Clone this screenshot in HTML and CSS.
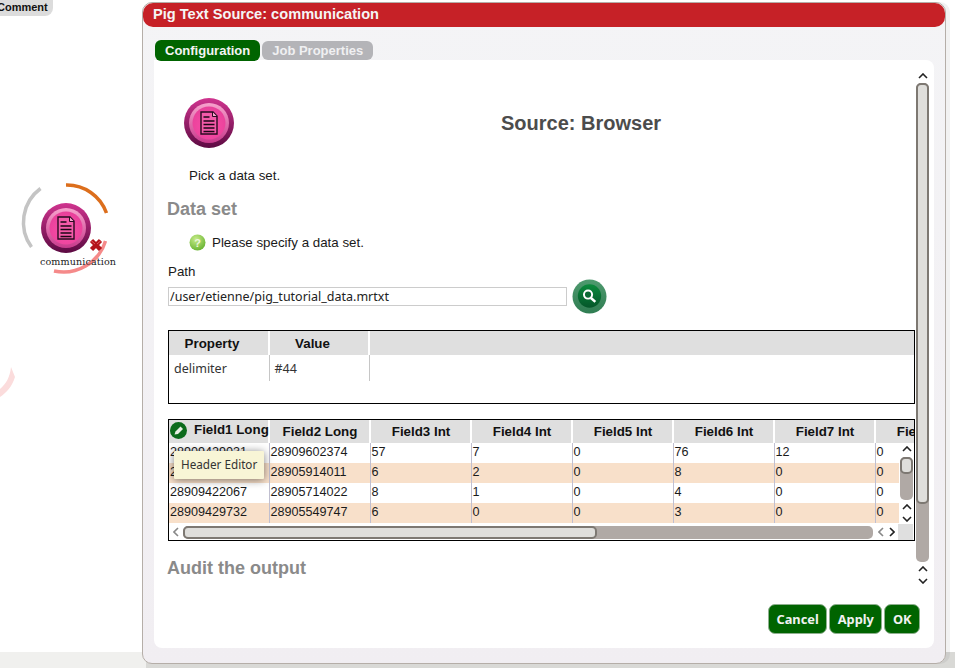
FILE: index.html
```html
<!DOCTYPE html>
<html lang="en">
<head>
  <meta charset="UTF-8">
  <title>Pig Text Source: communication</title>
  <link rel="stylesheet" href="styles.css">
</head>
<body>
  <svg class="defs" width="0" height="0">
    <defs>
      <linearGradient id="ringOuter" x1="0" y1="0" x2="0" y2="1">
        <stop offset="0" stop-color="#d0348f"/>
        <stop offset="1" stop-color="#5c0a42"/>
      </linearGradient>
      <linearGradient id="ringInner" x1="0" y1="0" x2="0" y2="1">
        <stop offset="0" stop-color="#f7a3cd"/>
        <stop offset="1" stop-color="#c83a8c"/>
      </linearGradient>
      <radialGradient id="ringFace" cx="0.5" cy="0.6" r="0.6">
        <stop offset="0" stop-color="#fb4fa8"/>
        <stop offset="1" stop-color="#e8409a"/>
      </radialGradient>
      <linearGradient id="searchOuter" x1="0" y1="0" x2="0" y2="1">
        <stop offset="0" stop-color="#4f9a6f"/>
        <stop offset="1" stop-color="#2f7d52"/>
      </linearGradient>
      <linearGradient id="searchInner" x1="0" y1="0" x2="0" y2="1">
        <stop offset="0" stop-color="#0a8a3c"/>
        <stop offset="1" stop-color="#05562a"/>
      </linearGradient>
      <radialGradient id="helpFace" cx="0.4" cy="0.3" r="0.8">
        <stop offset="0" stop-color="#c8ec8a"/>
        <stop offset="1" stop-color="#5fae28"/>
      </radialGradient>
      <symbol id="sourceIcon" viewBox="0 0 50 50">
        <circle cx="25" cy="25" r="25" fill="url(#ringOuter)"/>
        <circle cx="25" cy="25" r="20" fill="url(#ringInner)"/>
        <circle cx="25" cy="25" r="16.5" fill="url(#ringFace)"/>
        <path d="M17 14h12l4 4v18H17z" fill="#f35aa9" stroke="#2a0a20" stroke-width="1.4"/>
        <path d="M28.500 14v4.500H33" fill="#f8a8d0" stroke="#2a0a20" stroke-width="1"/>
        <path d="M19.500 19h6M19.500 23h11M19.500 26.500h11M19.500 30h11M19.500 33.500h11" stroke="#1c0616" stroke-width="1.500" fill="none"/>
      </symbol>
      <symbol id="chevUp" viewBox="0 0 10 6">
        <path d="M1 5l4-4 4 4" fill="none" stroke="currentColor" stroke-width="1.600"/>
      </symbol>
      <symbol id="chevDown" viewBox="0 0 10 6">
        <path d="M1 1l4 4 4-4" fill="none" stroke="currentColor" stroke-width="1.600"/>
      </symbol>
      <symbol id="chevLeft" viewBox="0 0 6 10">
        <path d="M5 1L1 5l4 4" fill="none" stroke="currentColor" stroke-width="1.600"/>
      </symbol>
      <symbol id="chevRight" viewBox="0 0 6 10">
        <path d="M1 1l4 4-4 4" fill="none" stroke="currentColor" stroke-width="1.600"/>
      </symbol>
    </defs>
  </svg>

  <div class="canvas">
    <div class="comment-tab">Comment</div>

    <div class="node">
      <svg class="node-rings" width="100" height="100" viewBox="0 0 100 100">
        <path d="M29.500 4.500A42 42 0 0 0 20.500 63" fill="none" stroke="#c4c4c4" stroke-width="3.500"/>
        <path d="M55 1A42 42 0 0 1 95.500 29" fill="none" stroke="#dc6e1c" stroke-width="3.500"/>
        <path d="M94.500 57A44 44 0 0 1 43 87" fill="none" stroke="#f58a8a" stroke-width="3.500"/>
      </svg>
      <svg class="node-icon" width="50" height="50"><use href="#sourceIcon"/></svg>
      <svg class="node-error" width="14" height="14" viewBox="0 0 14 14">
        <path d="M2.500 2.500l9 9M11.500 2.500l-9 9" fill="none" stroke="#b3141a" stroke-width="4.500"/>
        <path d="M2 2.500l4 3.500M12 2.500L8 6" fill="none" stroke="#e2585c" stroke-width="1"/>
      </svg>
      <div class="node-label">communication</div>
    </div>

    <svg class="stray-ring" width="16" height="31" viewBox="0 0 16 31">
      <path d="M11 0L15 10C12 20 6 26 0 30V22C6 17 10 10 11 0z" fill="#fbdcdc"/>
    </svg>

    <div class="floor">
      <div class="floor-left"></div>
      <div class="floor-right"></div>
    </div>

    <div class="dialog">
      <div class="dialog-title">Pig Text Source: communication</div>

      <div class="tabs">
        <div class="tab tab-active">Configuration</div>
        <div class="tab">Job Properties</div>
      </div>

      <div class="panel">
        <div class="panel-main">
          <div class="content">
            <div class="source-head">
              <svg class="source-icon" width="50" height="50"><use href="#sourceIcon"/></svg>
              <h2 class="source-title">Source: Browser</h2>
            </div>
            <p class="intro">Pick a data set.</p>

            <h3 class="section">Data set</h3>
            <div class="hint">
              <svg width="17" height="17" viewBox="0 0 17 17">
                <circle cx="8.500" cy="8.500" r="8" fill="url(#helpFace)"/>
                <text x="8.500" y="12.500" class="hint-mark">?</text>
              </svg>
              <span>Please specify a data set.</span>
            </div>

            <label class="path-label">Path</label>
            <div class="path-row">
              <input class="path-input" type="text" value="/user/etienne/pig_tutorial_data.mrtxt">
              <svg class="search-btn" width="35" height="35" viewBox="0 0 36 36">
                <circle cx="18" cy="18" r="17.500" fill="url(#searchOuter)"/>
                <circle cx="18" cy="17.500" r="12" fill="url(#searchInner)"/>
                <circle cx="16.500" cy="16" r="4.200" fill="#0b6a35" stroke="#fff" stroke-width="2"/>
                <path d="M19.500 19.500l4.500 4" stroke="#fff" stroke-width="2.600"/>
              </svg>
            </div>

            <div class="prop-box">
              <table class="prop-table">
                <thead>
                  <tr><th>Property</th><th>Value</th><th class="rest"></th></tr>
                </thead>
                <tbody>
                  <tr><td>delimiter</td><td>#44</td><td class="rest"></td></tr>
                </tbody>
              </table>
            </div>

            <div class="grid-box">
              <div class="grid-scroll">
                <table class="data-table">
                  <thead>
                    <tr>
                      <th class="first">Field1 Long</th>
                      <th>Field2 Long</th>
                      <th>Field3 Int</th>
                      <th>Field4 Int</th>
                      <th>Field5 Int</th>
                      <th>Field6 Int</th>
                      <th>Field7 Int</th>
                      <th>Field8 Int</th>
                    </tr>
                  </thead>
                  <tbody>
                    <tr><td class="first">28909429031</td><td>28909602374</td><td>57</td><td>7</td><td>0</td><td>76</td><td>12</td><td>0</td></tr>
                    <tr class="odd"><td class="first">28909429031</td><td>28905914011</td><td>6</td><td>2</td><td>0</td><td>8</td><td>0</td><td>0</td></tr>
                    <tr><td class="first">28909422067</td><td>28905714022</td><td>8</td><td>1</td><td>0</td><td>4</td><td>0</td><td>0</td></tr>
                    <tr class="odd"><td class="first">28909429732</td><td>28905549747</td><td>6</td><td>0</td><td>0</td><td>3</td><td>0</td><td>0</td></tr>
                  </tbody>
                </table>

                <svg class="pencil" width="17" height="17" viewBox="0 0 17 17">
                  <circle cx="8.500" cy="8.500" r="8.500" fill="#0c6b1c"/>
                  <path d="M4.500 12.500l1-3 5-5 2.500 2.500-5 5z" fill="#e8efe4"/>
                </svg>
                <div class="tooltip">Header Editor</div>

                <div class="vbar vbar-inner">
                  <svg class="chev-v"><use href="#chevUp"/></svg>
                  <div class="vtrack"><div class="vthumb"></div></div>
                  <svg class="chev-v"><use href="#chevUp"/></svg>
                  <svg class="chev-v"><use href="#chevDown"/></svg>
                </div>
              </div>

              <div class="hbar">
                <svg class="chev-h dim"><use href="#chevLeft"/></svg>
                <div class="htrack"><div class="hthumb"></div></div>
                <svg class="chev-h dim"><use href="#chevLeft"/></svg>
                <svg class="chev-h"><use href="#chevRight"/></svg>
                <div class="hcorner"></div>
              </div>
            </div>

            <h3 class="section section-audit">Audit the output</h3>
          </div>

          <div class="vbar vbar-outer">
            <svg class="chev-v"><use href="#chevUp"/></svg>
            <div class="vtrack"><div class="vthumb"></div></div>
            <svg class="chev-v"><use href="#chevUp"/></svg>
            <svg class="chev-v"><use href="#chevDown"/></svg>
          </div>
        </div>

        <div class="actions">
          <button class="btn">Cancel</button>
          <button class="btn">Apply</button>
          <button class="btn">OK</button>
        </div>
      </div>
    </div>
  </div>
</body>
</html>
```

FILE: styles.css
```css
html, body {
  margin: 0;
  padding: 0;
  height: 100%;
  background-color: #fff;
  overflow: hidden;
}
.defs {
  position: absolute;
}
.canvas {
  position: relative;
  width: 955px;
  height: 668px;
  overflow: hidden;
  font-family: "Liberation Sans", Arial, sans-serif;
  color: #1a1a1a;
}
.floor {
  position: absolute;
  left: 0;
  right: 0;
  top: 652px;
  bottom: 0;
  display: flex;
}
.floor-left {
  width: 146px;
  background-color: #f0f0ee;
}
.floor-right {
  flex: 1;
  background-color: #d9d9d6;
}
.comment-tab {
  position: absolute;
  left: 0;
  top: -1px;
  width: 53px;
  height: 17px;
  background-color: #dcdcdc;
  border-radius: 0 0 8px 0;
  font-size: 11px;
  font-weight: bold;
  line-height: 16px;
  text-indent: -3px;
  color: #111;
}
.node {
  position: absolute;
  left: 16px;
  top: 177px;
  width: 100px;
  height: 100px;
}
.node-rings {
  position: absolute;
  left: -5px;
  top: 7px;
  overflow: visible;
}
.node-icon {
  position: absolute;
  left: 25px;
  top: 26px;
}
.node-error {
  position: absolute;
  left: 73px;
  top: 61px;
}
.node-label {
  position: absolute;
  left: 24px;
  top: 78px;
  font-family: "DejaVu Serif", serif;
  font-size: 9.6px;
  line-height: 13px;
  color: #222;
  letter-spacing: 0.1px;
}
.stray-ring {
  position: absolute;
  left: 0;
  top: 367px;
}
.dialog {
  position: absolute;
  left: 142px;
  top: 2px;
  width: 802px;
  height: 660px;
  border: 1px solid #b5aea8;
  border-radius: 10px;
  background: linear-gradient(#f4f4f6, #f1eef2);
  box-shadow: 4px 0 0 rgba(0, 0, 0, 0.05);
}
.dialog-title {
  height: 24px;
  line-height: 23px;
  padding-left: 10px;
  background-color: #c62127;
  border-radius: 10px;
  color: #f5f5f5;
  font-size: 14.6px;
  font-weight: bold;
}
.tabs {
  display: flex;
  gap: 2px;
  margin: 13px 0 0 12px;
  height: 20px;
}
.tab {
  margin-top: 1px;
  padding: 0 10px;
  height: 19px;
  background-color: #b4b4b8;
  border-radius: 6px;
  color: #f0f0f2;
  font-size: 13px;
  font-weight: bold;
  line-height: 20px;
}
.tab-active {
  margin-top: 0;
  background-color: #006400;
  color: #f4f4f4;
  height: 21px;
  line-height: 21px;
}
.panel {
  margin: 0 11px 0 11px;
  height: 588px;
  background-color: #fff;
  border-radius: 0 8px 8px 8px;
}
.panel-main {
  display: flex;
  height: 531px;
}
.content {
  width: 762px;
  overflow: hidden;
}
.source-head {
  position: relative;
  height: 50px;
  padding: 38px 0 0 30px;
}
.source-icon {
  display: block;
}
.source-title {
  position: absolute;
  left: 347px;
  top: 50px;
  margin: 0;
  font-size: 20px;
  line-height: 26px;
  color: #4c4c4c;
}
.intro {
  margin: 20px 0 0 35px;
  font-size: 13.33px;
  line-height: 16px;
}
.section {
  margin: 14px 0 0 13px;
  font-size: 18px;
  line-height: 22px;
  color: #8a8a8a;
}
.hint {
  display: flex;
  align-items: center;
  gap: 6px;
  margin: 14px 0 0 35px;
  height: 17px;
  font-size: 13.33px;
}
.hint-mark {
  font-family: "Liberation Sans", sans-serif;
  font-size: 11px;
  font-weight: bold;
  fill: #eef6dd;
  text-anchor: middle;
}
.path-label {
  display: block;
  margin: 13px 0 0 14px;
  font-size: 13.33px;
  line-height: 16px;
}
.path-row {
  display: flex;
  align-items: center;
  gap: 5px;
  margin: -2px 0 0 14px;
  height: 36px;
}
.path-input {
  width: 394px;
  height: 17px;
  box-sizing: content-box;
  margin: 0;
  padding: 0 2px 0 1px;
  border: 1px solid #ccc;
  font-family: "Noto Sans", sans-serif;
  font-size: 12.5px;
  color: #222;
  outline: none;
}
.prop-box {
  box-sizing: border-box;
  margin: 16px 0 0 14px;
  width: 747px;
  height: 74px;
  border: 1px solid #000;
  background-color: #fff;
}
.prop-table {
  border-collapse: collapse;
  width: 100%;
  table-layout: fixed;
}
.prop-table th, .prop-table td {
  box-sizing: border-box;
  width: 100px;
  padding: 0;
}
.prop-table th {
  height: 24px;
  padding-right: 13px;
  background-color: #dfdfdf;
  border-right: 2px solid #fff;
  font-size: 13.33px;
  color: #111;
}
.prop-table td {
  height: 26px;
  padding-left: 5px;
  border-right: 1px solid #c6c6c6;
  font-family: "Noto Sans", sans-serif;
  font-size: 12.5px;
  color: #333;
}
.prop-table .rest {
  width: auto;
  border-right: 0;
}
.grid-box {
  box-sizing: border-box;
  margin: 15px 0 0 14px;
  width: 747px;
  height: 122px;
  border: 1px solid #000;
  background-color: #fff;
  overflow: hidden;
}
.grid-scroll {
  position: relative;
  height: 104px;
  overflow: hidden;
}
.data-table {
  border-collapse: collapse;
  table-layout: fixed;
  width: 807px;
}
.data-table th, .data-table td {
  width: 101px;
  padding: 0 0 0 1px;
  box-sizing: border-box;
}
.data-table .first {
  width: 100px;
}
.data-table th {
  height: 23px;
  background-color: #dfdfdf;
  border-right: 2px solid #fff;
  font-size: 13.33px;
  color: #111;
}
.data-table td {
  height: 20px;
  padding-bottom: 3px;
  border-right: 1px solid #c0bfd0;
  font-size: 12.6px;
  color: #1a1a1a;
}
.data-table .odd td {
  background-color: #f8e0ca;
}
.data-table th.first {
  padding: 0 0 5px 25px;
  white-space: nowrap;
  text-align: left;
}
.pencil {
  position: absolute;
  left: 1px;
  top: 2px;
}
.tooltip {
  position: absolute;
  left: 5px;
  top: 31px;
  width: 90px;
  height: 28px;
  box-sizing: border-box;
  padding-left: 7px;
  background-color: #f8f5d6;
  box-shadow: 0 1px 8px rgba(0, 0, 0, 0.5);
  border-radius: 1px;
  font-family: "Noto Sans", sans-serif;
  font-size: 11.7px;
  line-height: 27px;
  color: #333;
}
.vbar {
  display: flex;
  flex-direction: column;
  align-items: center;
}
.chev-v {
  display: block;
  flex: none;
  width: 10px;
  height: 6px;
  color: #222;
}
.vtrack {
  background-color: #b0a9a5;
  border-radius: 5px;
}
.vthumb {
  box-sizing: border-box;
  background-color: #dfdedb;
  border: 2px solid #7d7872;
  border-radius: 5px;
}
.vbar-outer {
  width: 13px;
  padding-top: 13px;
}
.vbar-outer .vtrack {
  width: 13px;
  height: 479px;
  margin: 4px 0;
}
.vbar-outer .vthumb {
  width: 13px;
  height: 421px;
}
.vbar-outer .chev-v + .vtrack + .chev-v + .chev-v {
  margin-top: 6px;
}
.vbar-inner {
  position: absolute;
  right: 0;
  top: 23px;
  width: 15px;
  height: 81px;
  background-color: #fff;
  box-sizing: border-box;
  padding-top: 3px;
}
.vbar-inner .vtrack {
  width: 13px;
  height: 43px;
  margin: 5px 0 4px;
}
.vbar-inner .vthumb {
  width: 13px;
  height: 17px;
}
.vbar-inner .chev-v + .vtrack + .chev-v + .chev-v {
  margin-top: 6px;
}
.hbar {
  display: flex;
  align-items: center;
  height: 16px;
}
.chev-h {
  display: block;
  flex: none;
  width: 6px;
  height: 10px;
  color: #222;
}
.chev-h.dim {
  color: #888;
}
.hbar > .chev-h:first-child {
  margin-left: 4px;
}
.htrack {
  width: 690px;
  height: 13px;
  margin: 0 5px 0 4px;
  background-color: #b0a9a5;
  border-radius: 5px;
}
.hthumb {
  box-sizing: border-box;
  width: 414px;
  height: 13px;
  background-color: #dfdedb;
  border: 2px solid #7d7872;
  border-radius: 5px;
}
.hbar .chev-h + .chev-h {
  margin-left: 5px;
}
.hcorner {
  width: 15px;
  height: 16px;
  margin-left: 3px;
  background-color: #dfdfdf;
}
.section-audit {
  margin-top: 16px;
}
.actions {
  display: flex;
  justify-content: flex-end;
  gap: 2px;
  margin-top: 13px;
  padding-right: 14px;
}
.btn {
  height: 30px;
  padding: 0 7.5px;
  background-color: #006400;
  border: 1px solid #8fb08f;
  border-radius: 7px;
  color: #f2f2f2;
  font-family: "Noto Sans", sans-serif;
  font-size: 12.8px;
  font-weight: bold;
}
```
